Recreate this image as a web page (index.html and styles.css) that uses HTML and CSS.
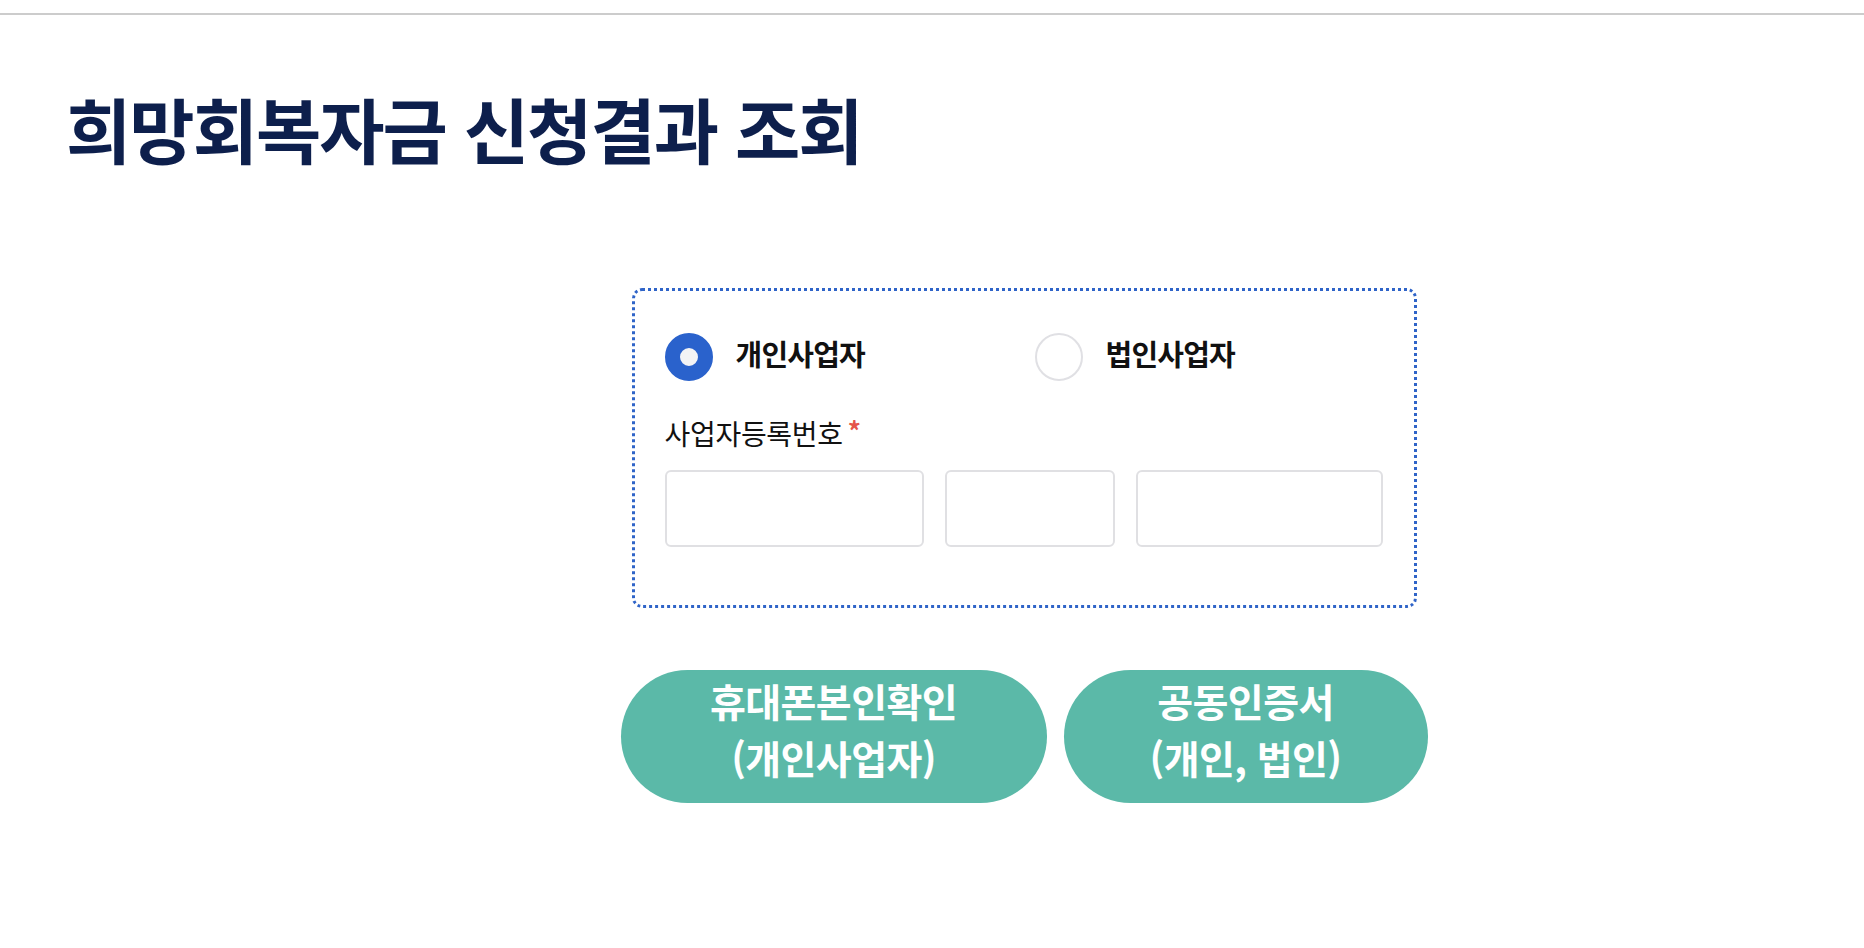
FILE: index.html
```html
<!DOCTYPE html>
<html lang="ko">
<head>
<meta charset="utf-8">
<title>희망회복자금 신청결과 조회</title>
<link rel="stylesheet" href="styles.css">
</head>
<body>
<div class="topline"></div>
<h1 class="title">희망회복자금 신청결과 조회</h1>
<main class="main">
  <section class="card">
    <div class="radios">
      <label class="radio">
        <span class="dot dot-on"></span>
        <span class="radio-text">개인사업자</span>
      </label>
      <label class="radio">
        <span class="dot"></span>
        <span class="radio-text">법인사업자</span>
      </label>
    </div>
    <div class="field-label">사업자등록번호<span class="req">*</span></div>
    <div class="inputs">
      <div class="inp inp-a"></div>
      <div class="inp inp-b"></div>
      <div class="inp inp-c"></div>
    </div>
  </section>
  <div class="buttons">
    <button class="btn btn-phone">휴대폰본인확인<br>(개인사업자)</button>
    <button class="btn btn-cert">공동인증서<br>(개인, 법인)</button>
  </div>
</main>
</body>
</html>
```
FILE: styles.css
```css
html, body {
  margin: 0;
  padding: 0;
  background: #ffffff;
}
body {
  font-family: "Noto Sans CJK KR", "Noto Sans", sans-serif;
  color: #111111;
}
.topline {
  margin-top: 13px;
  height: 2px;
  background: #cccccc;
}
.title {
  margin: 0;
  padding: 70px 0 0 66px;
  font-size: 71px;
  line-height: 84px;
  font-weight: 700;
  color: #0d1f4c;
  letter-spacing: -2px;
}
.main {
  padding-left: 184px;
  padding-top: 119px;
  display: flex;
  flex-direction: column;
  align-items: center;
}
.card {
  width: 785px;
  box-sizing: border-box;
  border: 3px dotted #2f64c8;
  border-radius: 10px;
  padding: 41px 29px 58px 30px;
}
.radios {
  display: grid;
  grid-template-columns: 370px auto;
}
.radio {
  display: flex;
  align-items: center;
}
.dot {
  width: 48px;
  height: 48px;
  box-sizing: border-box;
  border-radius: 50%;
  border: 2px solid #e0e0e4;
  background: #ffffff;
}
.dot-on {
  border: 15px solid #2a62cc;
  background: #f3f3f5;
}
.radio-text {
  margin-left: 23px;
  margin-bottom: 7px;
  font-size: 29px;
  font-weight: 700;
  letter-spacing: -0.8px;
  color: #111;
}
.field-label {
  margin-top: 30px;
  font-size: 28px;
  line-height: 38px;
  letter-spacing: -0.3px;
  color: #111;
}
.req {
  color: #e5534b;
  font-size: 26px;
  margin-left: 5px;
  vertical-align: 4px;
  font-weight: 700;
}
.inputs {
  margin-top: 18px;
  display: flex;
  gap: 21px;
}
.inp {
  height: 77px;
  box-sizing: border-box;
  border: 2px solid #e0e0e3;
  border-radius: 6px;
  background: #fff;
}
.inp-a { width: 259px; }
.inp-b { width: 170px; }
.inp-c { width: 247px; }
.buttons {
  margin-top: 62px;
  display: flex;
  gap: 17px;
}
.btn {
  height: 133px;
  border: none;
  border-radius: 67px;
  background: #5bb9a8;
  color: #ffffff;
  font-family: "Noto Sans CJK KR", "Noto Sans", sans-serif;
  font-size: 39px;
  font-weight: 700;
  line-height: 57px;
  letter-spacing: -0.6px;
  padding: 0 0 16px 0;
}
.btn-phone { width: 426px; }
.btn-cert { width: 364px; }
```
